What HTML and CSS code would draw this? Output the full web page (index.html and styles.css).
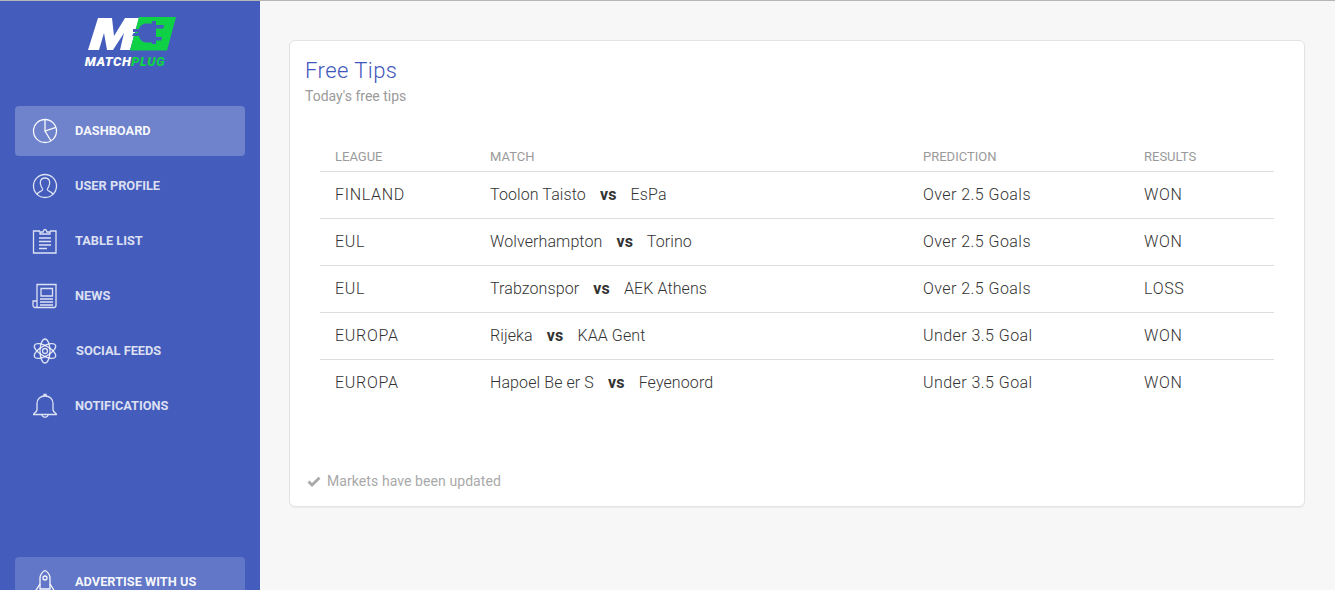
FILE: index.html
```
<!DOCTYPE html>
<html lang="en">
<head>
<meta charset="utf-8">
<title>MatchPlug</title>
<link rel="stylesheet" href="styles.css">
</head>
<body>
<div class="app">
  <aside class="sidebar">
    <div class="logo">
      <svg class="logo-mark" viewBox="0 0 90 36" width="90" height="36">
        <path fill="#fff" d="M1 34 L11 2 L25 2 L27 20 L38 2 L52 2 L43 34 L33 34 L37 17 L26 34 L20 34 L17 17 L12 34 Z"/>
        <path fill="#0ed145" d="M52 1 L89 1 L80 34.500 L43 34.500 Z"/>
        <path fill="#445dbd" d="M46 13 L52 13 C53 9.500 56 7.500 60 7.500 L65 7.500 L65 5 L69 5 L69 9 L77 9 L76.300 12.500 L69 12.500 L69 21 L75 21 L74.300 24.500 L69 24.500 L69 28 L65 28 L65 26.500 L60 26.500 C56 26.500 53 24.500 52 20 L45 20 L46.500 17 L51 17 L51 16 L46 16 Z"/>
      </svg>
      <div class="logo-text"><span>MATCH</span><span class="plug">PLUG</span></div>
    </div>
    <nav class="nav">
      <a class="nav-item active">
        <svg class="ico" viewBox="1 1 24 24"><circle cx="13" cy="13" r="11.500"/><path d="M13 1.500 V13 L23.800 9.300 M13 13 L19 23"/></svg>
        <span>Dashboard</span>
      </a>
      <a class="nav-item">
        <svg class="ico" viewBox="1 1 24 24"><circle cx="13" cy="13" r="11.500"/><path d="M5 21.500 C6 18.500 9.500 18.500 10.500 17 C11 16 10.500 15.500 9.500 14 C7.500 11 7.500 5 13 5 C18.500 5 18.500 11 16.500 14 C15.500 15.500 15 16 15.500 17 C16.500 18.500 20 18.500 21 21.500"/></svg>
        <span>User Profile</span>
      </a>
      <a class="nav-item">
        <svg class="ico" viewBox="1 1 24 24"><path d="M8 3 H1.500 V25 H24 V3 H18"/><path d="M8 6 V4 H11 C11.500 2 12 1.500 13 1.500 C14 1.500 14.500 2 15 4 H18 V6 Z"/><path d="M7 10 H19 M7 13.500 H19 M7 17 H19 M7 20.500 H15"/></svg>
        <span>Table List</span>
      </a>
      <a class="nav-item">
        <svg class="ico" viewBox="1 1 24 24"><path d="M5 18 V1.500 H24 V22 C24 23.500 23 24.500 22 24.500 H3 C2 24.500 1 23.500 1 22 V18 H5 V24"/><path d="M9 5.500 H20.500 V13 H9 Z M8 16 H21 M8 19 H21 M8 22 H21"/></svg>
        <span>News</span>
      </a>
      <a class="nav-item">
        <svg class="ico" viewBox="1 1 24 24"><circle cx="13" cy="13" r="2.500"/><ellipse cx="13" cy="13" rx="5" ry="12"/><ellipse cx="13" cy="13" rx="5" ry="12" transform="rotate(60 13 13)"/><ellipse cx="13" cy="13" rx="5" ry="12" transform="rotate(-60 13 13)"/></svg>
        <span class="shift">Social Feeds</span>
      </a>
      <a class="nav-item">
        <svg class="ico" viewBox="1 1 24 24"><path d="M1.500 21.500 C1 20.500 4.500 19.500 5 17 V10.500 C5 6 8.500 3 13 3 C17.500 3 21 6 21 10.500 V17 C21.500 19.500 25 20.500 24.500 21.500 Z"/><path d="M12 3 V1.500 H14 V3 M10 22 C10.500 25 15.500 25 16 22"/></svg>
        <span>Notifications</span>
      </a>
    </nav>
    <a class="nav-item promo">
      <svg class="ico" viewBox="1 1 24 24"><path d="M8 20 V9 C8 6 10.500 2.500 13 1.500 C15.500 2.500 18 6 18 9 V20 Z"/><circle cx="13" cy="9" r="2"/><path d="M8 15 L3.500 22 V25 H8 M18 15 L22.500 22 V25 H18"/></svg>
      <span>Advertise with us</span>
    </a>
  </aside>
  <main class="content">
    <section class="card">
      <header class="card-head">
        <h1 class="card-title">Free Tips</h1>
        <p class="card-sub">Today's free tips</p>
      </header>
      <table class="tips">
        <colgroup><col class="c1"><col class="c2"><col class="c3"><col class="c4"></colgroup>
        <thead>
          <tr><th>League</th><th>Match</th><th>Prediction</th><th>Results</th></tr>
        </thead>
        <tbody>
          <tr><td class="wide">FINLAND</td><td class="name">Toolon Taisto <b>vs</b> EsPa</td><td>Over 2.5 Goals</td><td class="wide">WON</td></tr>
          <tr><td class="wide">EUL</td><td class="name">Wolverhampton <b>vs</b> Torino</td><td>Over 2.5 Goals</td><td class="wide">WON</td></tr>
          <tr><td class="wide">EUL</td><td class="name">Trabzonspor <b>vs</b> AEK Athens</td><td>Over 2.5 Goals</td><td class="wide">LOSS</td></tr>
          <tr><td class="wide">EUROPA</td><td class="name">Rijeka <b>vs</b> KAA Gent</td><td>Under 3.5 Goal</td><td class="wide">WON</td></tr>
          <tr><td class="wide">EUROPA</td><td class="name">Hapoel Be er S <b>vs</b> Feyenoord</td><td>Under 3.5 Goal</td><td class="wide">WON</td></tr>
        </tbody>
      </table>
      <footer class="card-foot">
        <svg class="check" viewBox="0 0 14 11"><path d="M1.500 5.500 L5 9 L12.500 1.800" /></svg>
        <span>Markets have been updated</span>
      </footer>
    </section>
  </main>
</div>
</body>
</html>
```
FILE: styles.css
```
* { box-sizing: border-box; }
html, body { margin: 0; padding: 0; height: 590px; overflow: hidden; }
body { font-family: Roboto, "Liberation Sans", sans-serif; background: #f7f7f7; color: #333; border-top: 1px solid #b5b5b5; }
.app { display: flex; height: 589px; }
.sidebar { width: 260px; flex: none; background: #445dbd; padding: 15px 15px 0; overflow: hidden; color: #fff; }
.logo { height: 90px; display: flex; flex-direction: column; align-items: center; }
.logo-mark { display: block; margin-left: 4px; }
.logo-text { font: italic 900 13px/14px Roboto, sans-serif; letter-spacing: 0.5px; margin: 3px 10px 0 0; color: #fff; }
.plug { color: #0ed145; }
.nav { display: flex; flex-direction: column; gap: 5px; }
.nav-item { display: flex; align-items: center; height: 50px; padding-left: 18px; border-radius: 4px; font-size: 12.800px; font-weight: 700; text-transform: uppercase; color: rgba(255,255,255,.82); }
.nav-item span { margin-left: 18px; padding-bottom: 2px; }
.nav-item .shift { margin-left: 19px; }
.ico { width: 24px; height: 24px; flex: none; fill: none; stroke: currentColor; stroke-width: 1.300; overflow: visible; }
.active { background: rgba(255,255,255,.23); color: rgba(255,255,255,.95); }
.promo { margin-top: 126px; background: rgba(255,255,255,.16); color: rgba(255,255,255,.95); }
.content { flex: 1; padding: 39px 30px 0 29px; }
.card { height: 467px; background: #fff; border: 1px solid #e3e3e3; border-radius: 6px; padding: 15px 15px 0; box-shadow: 0 1px 1px rgba(0,0,0,.05); position: relative; }
.card-head { height: 88px; }
.card-title { margin: 0; font-size: 22px; line-height: 30px; font-weight: 300; letter-spacing: 0.45px; color: #3f57bb; }
.card-sub { margin: 0; font-size: 14px; line-height: 20px; font-weight: 400; color: #9a9a9a; }
.tips { width: 954px; border-collapse: collapse; table-layout: fixed; margin-left: 15px; margin-top: 0; }
.c1 { width: 155px; } .c2 { width: 433px; } .c3 { width: 221px; } .c4 { width: 145px; }
.tips th { height: 27px; padding: 0 0 2px 15px; text-align: left; font-size: 13px; font-weight: 400; text-transform: uppercase; color: #9a9a9a; border-bottom: 1px solid #ddd; }
.tips td { height: 47px; padding: 0 0 0 15px; font-size: 16px; font-weight: 300; letter-spacing: 0.45px; color: #333; border-bottom: 1px solid #ddd; }
.tips td.wide { letter-spacing: 0.7px; }
.tips td.name { letter-spacing: 0.1px; }
.tips tbody tr:last-child td { border-bottom: 0; }
.tips b { font-size: 16px; font-weight: 700; letter-spacing: 0.2px; margin: 0 10px; }
.card-foot { position: absolute; left: 17px; bottom: 17px; display: flex; align-items: center; gap: 6px; font-size: 14px; letter-spacing: 0.08px; color: #a9a9a9; }
.check { width: 14px; height: 11px; fill: none; stroke: #a9a9a9; stroke-width: 2.800; }
```
